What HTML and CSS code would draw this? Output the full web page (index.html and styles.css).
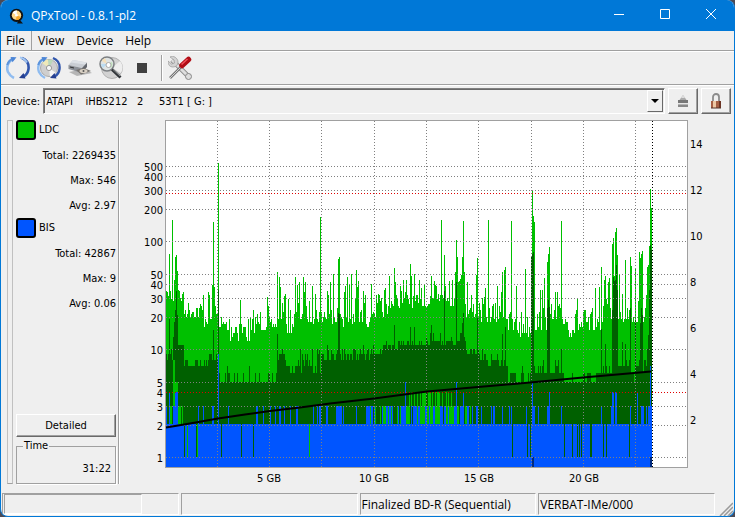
FILE: index.html
```
<!DOCTYPE html>
<html lang="en">
<head>
  <meta charset="utf-8">
  <title>QPxTool - 0.8.1-pl2</title>
  <link rel="stylesheet" href="styles.css">
</head>
<body>
  <div class="window">
    <header class="titlebar">
      <svg class="app-icon" viewBox="0 0 16 16">
        <path d="M10 11l4 4.5H8z" fill="#111"/>
        <circle cx="7.5" cy="7.3" r="6.6" fill="#111"/>
        <circle cx="7.5" cy="7.3" r="4.7" fill="#ffd98a"/>
        <path d="M7.5 7.3L3.5 4.8A4.7 4.7 0 0 1 8 2.6z" fill="#fff"/>
        <path d="M7.5 7.3l4.4 1.6A4.7 4.7 0 0 1 7 12z" fill="#f4a82c"/>
        <circle cx="7.5" cy="7.3" r="1.3" fill="#fff"/>
      </svg>
      <h1>QPxTool - 0.8.1-pl2</h1>
      <div class="window-buttons">
        <button aria-label="Minimize"><svg viewBox="0 0 10 10"><path d="M0 5.5h10"/></svg></button>
        <button aria-label="Maximize"><svg viewBox="0 0 10 10"><path d="M.5.5h9v9h-9z"/></svg></button>
        <button aria-label="Close"><svg viewBox="0 0 10 10"><path d="M0 0l10 10M10 0L0 10"/></svg></button>
      </div>
    </header>

    <nav class="menubar">
      <button class="active">File</button>
      <button>View</button>
      <button>Device</button>
      <button>Help</button>
    </nav>

    <div class="toolbar">
      <button aria-label="Rescan bus">
        <svg viewBox="0 0 24 24" fill="none">
          <path d="M8 2.500C2 5 0 11 2 16c1.200 2.500 3 4.500 6 6" stroke="#8fbcf0" stroke-width="2.600"/>
          <path d="M1.200 9C2 5.500 4.500 3.500 8 2.200" stroke="#5b93dc" stroke-width="2"/>
          <path d="M4.500 1l6 .2-4 5z" fill="#4d86d6"/>
          <path d="M16 2c5 2 7 6.500 6.500 11-.4 3-2 6-5 7.500" stroke="#3156ac" stroke-width="2.600"/>
          <path d="M14 1.500c3 .5 5.500 2.500 7 5" stroke="#a4c8f2" stroke-width="2"/>
          <path d="M19.500 22.500l-6.500-.5 4.500-5z" fill="#253f91"/>
        </svg>
      </button>
      <button aria-label="Update media info">
        <svg viewBox="0 0 24 24" fill="none">
          <circle cx="12" cy="12" r="8.500" fill="#cfcfcf" stroke="#aaa"/>
          <path d="M12 12L5 7a8.500 8.500 0 0 1 6-3.500z" fill="#efe9b8"/>
          <path d="M12 12L11 3.500a8.500 8.500 0 0 1 5 1z" fill="#b8d8b8"/>
          <path d="M12 12l7 5a8.500 8.500 0 0 1-6 3.500z" fill="#f5f5f5"/>
          <circle cx="12" cy="12" r="2.600" fill="#f7f7f7" stroke="#999"/>
          <path d="M8 2.500C2 5 0 11 2 16c1.200 2.500 3 4.500 6 6" stroke="#8fbcf0" stroke-width="2.400"/>
          <path d="M1.200 9C2 5.500 4.500 3.500 8 2.200" stroke="#5b93dc" stroke-width="2"/>
          <path d="M4.500 1l6 .2-4 5z" fill="#4d86d6"/>
          <path d="M16 2c5 2 7 6.500 6.500 11-.4 3-2 6-5 7.500" stroke="#3156ac" stroke-width="2.400"/>
          <path d="M19.500 22.500l-6.500-.5 4.500-5z" fill="#253f91"/>
        </svg>
      </button>
      <button aria-label="Eject or load">
        <svg viewBox="0 0 24 24">
          <path d="M1 16l8 4 15-3-8-4z" fill="#b5b5b5"/>
          <path d="M5 4l14 2.500L14 12 .5 9z" fill="#c9cdd3"/>
          <path d="M.5 9L14 12v5L.5 13z" fill="#8d9198"/>
          <path d="M14 12l5-5.500V11l-5 6z" fill="#63676e"/>
          <path d="M5 4l14 2.500-2 2L2.500 6.500z" fill="#dde1e6"/>
          <path d="M8 14l8-2 7 3-10 3.500z" fill="#77736f"/>
          <ellipse cx="15.500" cy="15" rx="4" ry="2" fill="#d8d0c4"/>
          <circle cx="15.500" cy="15" r="1" fill="#555"/>
          <path d="M2 11l4 1" stroke="#333" stroke-width="1"/>
        </svg>
      </button>
      <button aria-label="Scan media">
        <svg viewBox="0 0 24 24" fill="none">
          <circle cx="13" cy="12" r="10.500" fill="#d2d2d2" stroke="#b0b0b0"/>
          <path d="M13 12L21 5a10.500 10.500 0 0 1 1 12z" fill="#eee"/>
          <circle cx="8" cy="8" r="7" fill="#dfe4e4" stroke="#7d8083" stroke-width="1.500"/>
          <path d="M8 8L3 5a6 6 0 0 1 3-3z" fill="#f5dfb9"/>
          <path d="M8 8L2 8a6 6 0 0 0 2 4z" fill="#bbdcf2"/>
          <path d="M8 8l5-2a6 6 0 0 1-1 6z" fill="#bfe2bb"/>
          <circle cx="9.500" cy="9" r="2.500" fill="#fff" stroke="#aaa"/>
          <path d="M13 13.500l8.500 8" stroke="#303438" stroke-width="3"/>
          <path d="M14 13.500l7 6.500" stroke="#8b8f91"/>
        </svg>
      </button>
      <button aria-label="Stop"><svg viewBox="0 0 24 24"><path d="M7 7h10v10H7z" fill="#404040"/></svg></button>
      <span class="divider"></span>
      <button aria-label="Preferences">
        <svg viewBox="0 0 24 24" fill="none">
          <path d="M4 4l16 16" stroke="#888" stroke-width="4.600"/>
          <path d="M4 4l16 16" stroke="#dedede" stroke-width="3"/>
          <path d="M2 1l4 3 .5 3-3 1L0 5c0 4 2 6 5 6 3 0 5-2 5-5S7 .5 4 0z" fill="#d3d3d3" stroke="#999" stroke-width=".7"/>
          <circle cx="20.500" cy="20.500" r="3" fill="#ddd" stroke="#888"/>
          <path d="M2 22L14 10" stroke="#777" stroke-width="2.600"/>
          <path d="M2 22L14 10" stroke="#d0d0d0" stroke-width="1"/>
          <path d="M14 9.500l6.500-6" stroke="#b10d16" stroke-width="5.500" stroke-linecap="round"/>
          <path d="M13.500 8.500l6-5.500" stroke="#f0505a" stroke-width="1.600"/>
        </svg>
      </button>
    </div>

    <div class="device-row">
      <label for="device">Device:</label>
      <div class="combo">
        <select id="device">
          <option>ATAPI&nbsp;&nbsp;&nbsp; iHBS212&nbsp;&nbsp; 2&nbsp;&nbsp;&nbsp;&nbsp; 53T1 [ G: ]</option>
        </select>
        <span class="combo-arrow"></span>
      </div>
      <button class="push icon" aria-label="Eject">
        <svg viewBox="0 0 12 14"><path d="M6 1l5 7H1z" fill="#aaa"/><path d="M6 1l2 3H4z" fill="#ddd"/><path d="M1 6h10v3H1z" fill="#777"/><path d="M1 10h10v3H1z" fill="#888"/><path d="M1 10h10" stroke="#ddd"/></svg>
      </button>
      <button class="push icon" aria-label="Lock">
        <svg viewBox="0 0 12 16"><path d="M3 8V4a3 3 0 0 1 6 0v4" fill="none" stroke="#8b8b8b" stroke-width="1.800"/><path d="M1 8h10v7H1z" fill="#a65f43"/><path d="M3 8h3v7H3z" fill="#edc8a4"/><path d="M9 8h2v7H9z" fill="#6b3424"/><path d="M1 15h10" stroke="#54352b"/></svg>
      </button>
    </div>

    <main class="content">
      <div class="handle"></div>
      <aside class="stats">
        <div class="series"><span class="swatch ldc"></span>LDC</div>
        <p>Total: 2269435</p>
        <p>Max: 546</p>
        <p>Avg: 2.97</p>
        <div class="series"><span class="swatch bis"></span>BIS</div>
        <p>Total: 42867</p>
        <p>Max: 9</p>
        <p>Avg: 0.06</p>
        <button class="push detailed">Detailed</button>
        <fieldset>
          <legend>Time</legend>
          31:22
        </fieldset>
      </aside>
      <div class="splitter"></div>
      <svg id="chart" class="chart" viewBox="121 120 613 370" role="img" aria-label="LDC and BIS errors"></svg>
    </main>

    <footer class="statusbar">
      <div class="cell"><div class="progress"></div></div>
      <div class="cell"></div>
      <div class="cell">Finalized BD-R (Sequential)</div>
      <div class="cell">VERBAT-IMe/000</div>
      <svg class="grip" viewBox="0 0 14 14"><path d="M1 14L14 1M5 14l9-9M9 14l5-5" stroke="#9a9a9a" stroke-width="1.500"/></svg>
    </footer>
  </div>
  <script src="chart.js"></script>
</body>
</html>
```

FILE: styles.css
```
* {
  box-sizing: border-box;
}
body {
  margin: 0;
  background: #4c4a55;
  font-family: "DejaVu Sans Condensed", "DejaVu Sans", sans-serif;
  font-size: 11px;
  line-height: 14px;
  color: #000;
}
button, select {
  font: inherit;
  color: inherit;
  margin: 0;
  padding: 0;
  border: 0;
  border-radius: 0;
  background: none;
}
.window {
  display: flex;
  flex-direction: column;
  min-height: 100vh;
  border: 1px solid #0078d7;
  border-top: 0;
  border-radius: 8px;
  background: #efefef;
  overflow: hidden;
}

/* title bar */
.titlebar {
  display: flex;
  align-items: center;
  height: 31px;
  padding-left: 8px;
  background: #0078d7;
  color: #fff;
}
.app-icon {
  width: 16px;
  height: 16px;
}
.titlebar h1 {
  flex: 1;
  margin: 0 0 0 6px;
  font: 12px/16px "Open Sans", "Noto Sans", sans-serif;
}
.window-buttons {
  display: flex;
}
.window-buttons button {
  width: 46px;
  height: 31px;
}
.window-buttons svg {
  width: 10px;
  height: 10px;
  fill: none;
  stroke: #fff;
  overflow: visible;
}

/* menu and toolbar */
.menubar {
  display: flex;
  height: 21px;
  border-bottom: 1px solid #fff;
  box-shadow: inset 0 -1px #a0a0a0;
  font: 12px/18px "Open Sans", "Noto Sans", sans-serif;
}
.menubar button {
  height: 19px;
  padding: 0 6px 0 5px;
  border-right: 1px solid transparent;
}
.menubar .active {
  border-color: #a0a0a0;
}
.menubar button + button {
  padding-right: 5px;
  padding-left: 6px;
}
.toolbar {
  display: flex;
  align-items: center;
  height: 34px;
  padding: 0 1px 2px;
  border-bottom: 1px solid #fff;
  box-shadow: inset 0 -1px #a0a0a0;
}
.toolbar button {
  width: 31px;
  height: 31px;
}
.toolbar svg {
  display: block;
  width: 24px;
  height: 24px;
  margin: 0 auto;
}
.divider {
  width: 2px;
  height: 26px;
  margin: 0 1px 0 4px;
  border-left: 1px solid #a0a0a0;
  border-right: 1px solid #fff;
}

/* device selector */
.device-row {
  display: flex;
  align-items: center;
  gap: 3px;
  height: 30px;
  padding: 0 2px;
}
.device-row label {
  padding-top: 2px;
}
.combo {
  position: relative;
  flex: 1;
  height: 26px;
}
.combo select {
  appearance: none;
  width: 100%;
  height: 26px;
  padding-top: 1px;
  padding-left: 2px;
  border: 1px solid;
  border-color: #808080 #fff #fff #808080;
  box-shadow: inset 1px 1px #696969;
}
.combo-arrow {
  position: absolute;
  top: 2px;
  right: 2px;
  width: 16px;
  height: 22px;
  border: 1px solid;
  border-color: #fff #696969 #696969 #fff;
  background: #efefef;
  pointer-events: none;
}
.combo-arrow::after {
  content: "";
  position: absolute;
  top: 8px;
  left: 3px;
  border: 4px solid transparent;
  border-top-color: #000;
  border-bottom: 0;
}
.push {
  border: 1px solid;
  border-color: #fff #696969 #696969 #fff;
  box-shadow: inset -1px -1px #a0a0a0;
}
.push.icon {
  width: 30px;
  height: 26px;
}
.push.icon + .push.icon {
  margin-right: 1px;
}
.push svg {
  display: block;
  width: 12px;
  height: 16px;
  margin: 0 auto;
}

/* main area */
.content {
  display: flex;
  padding-top: 4px;
}
.handle {
  width: 6px;
  margin: 0 3px 6px 6px;
  border: 1px solid #c0c0c0;
  border-bottom-color: #a0a0a0;
}
.stats {
  display: flex;
  flex-direction: column;
  width: 100px;
  margin-bottom: 6px;
}
.series {
  display: flex;
  align-items: center;
  gap: 3px;
  padding-bottom: 1px;
  line-height: 20px;
}
.swatch {
  width: 20px;
  height: 20px;
  border: 2px solid #000;
  border-radius: 3px;
}
.ldc {
  background: #00c000;
}
.bis {
  background: #0055ff;
}
.stats p {
  height: 25px;
  margin: 0;
  padding-top: 8px;
  text-align: right;
}
.stats p + .series {
  margin-top: 2px;
}
.detailed {
  flex: none;
  height: 23px;
  margin-top: auto;
}
.stats fieldset {
  margin: 2px 0 0;
  padding: 9px 4px 7px;
  border: 1px solid #a0a0a0;
  box-shadow: 1px 1px #fff;
  text-align: right;
}
.stats legend {
  margin-left: 2px;
  padding: 0 1px;
  text-align: left;
}
.splitter {
  width: 3px;
  margin-bottom: 6px;
  margin-left: 2px;
  border-left: 1px solid #a0a0a0;
  box-shadow: inset 1px 0 #fff;
}
.chart {
  display: block;
  flex: 1;
  min-width: 0;
}
.chart text {
  font-size: 11px;
}
.chart .left {
  text-anchor: end;
}
.chart .middle {
  text-anchor: middle;
}
.bars {
  shape-rendering: crispEdges;
}

/* status bar */
.statusbar {
  display: flex;
  align-items: center;
  gap: 2px;
  height: 26px;
  padding: 1px 1px 0;
}
.cell {
  flex: 1;
  height: 22px;
  padding: 0 1px;
  border: 1px solid;
  border-color: #a0a0a0 #fff #fff #a0a0a0;
  font: 12px/22px "Open Sans", "Noto Sans", sans-serif;
}
.progress {
  width: 80%;
  height: 20px;
  border: 1px solid;
  border-color: #a0a0a0 #fff #fff #a0a0a0;
}
.grip {
  align-self: flex-end;
  width: 14px;
  height: 14px;
  margin-left: 2px;
}
```

FILE: chart.js
```
const LEFT = 166, TOP = 121, RIGHT = 687, BOTTOM = 467, END = 652;

// error count -> y, log scale
const logY = v => Math.round(457 - 107.8 * Math.log10(v));

let seed = 7;
function rnd() {
  seed = (seed * 16807) % 2147483647;
  return seed / 2147483647;
}

// [first x, highest y, lowest y]
const ldcMax = [[166, 290, 304], [184, 297, 318], [203, 301, 327], [220, 303, 341], [240, 309, 343],
  [253, 305, 332], [270, 320, 328], [277, 296, 320], [285, 296, 335], [299, 298, 324], [343, 296, 328],
  [370, 297, 318], [390, 292, 308], [410, 294, 308], [430, 289, 302], [446, 294, 308], [466, 296, 318],
  [480, 298, 322], [494, 300, 324], [508, 308, 338], [535, 304, 332], [551, 301, 328], [567, 303, 338],
  [590, 307, 332], [601, 296, 322], [622, 296, 324], [645, 294, 310]];
const ldcAvg = [[166, 345, 360], [173, 325, 340], [178, 345, 345], [184, 358, 368], [209, 350, 360],
  [219, 366, 382], [232, 373, 382], [246, 366, 382], [257, 373, 382], [277, 349, 361], [286, 354, 373],
  [300, 345, 373], [321, 345, 361], [333, 341, 361], [342, 345, 361], [372, 345, 354], [384, 341, 350],
  [398, 337, 346], [430, 333, 342], [441, 338, 346], [456, 330, 345], [466, 345, 355], [475, 350, 361],
  [488, 354, 367], [508, 366, 382], [538, 360, 378], [561, 373, 382], [597, 366, 376],
  [612, 358, 367], [630, 360, 382], [638, 355, 375], [645, 345, 365]];

const ldcSpikes = [[167, 292], [169, 254], [170, 291], [172, 220], [174, 280], [175, 257], [176, 255],
  [177, 271], [178, 290], [179, 291], [182, 294], [203, 295], [208, 292], [209, 295], [212, 285],
  [213, 222], [214, 287], [218, 163], [240, 300], [267, 297], [277, 272], [279, 277], [280, 287],
  [285, 294], [295, 277], [297, 285], [299, 282], [303, 277], [304, 292], [305, 282], [312, 286],
  [315, 294], [320, 217], [327, 291], [328, 295], [330, 282], [333, 274], [338, 259], [339, 257],
  [344, 292], [345, 286], [347, 277], [349, 285], [351, 274], [356, 270], [357, 287], [358, 281],
  [363, 291], [365, 295], [371, 284], [376, 295], [378, 294], [379, 295], [384, 290], [385, 288],
  [389, 276], [394, 268], [395, 282], [400, 286], [401, 291], [403, 280], [405, 292], [406, 280],
  [410, 264], [411, 276], [414, 274], [419, 280], [421, 288], [424, 285], [431, 276], [434, 281],
  [435, 285], [436, 286], [438, 294], [440, 295], [441, 220], [442, 295], [444, 255], [445, 286],
  [449, 281], [452, 280], [455, 272], [456, 240], [457, 257], [458, 282], [459, 281], [460, 279],
  [461, 275], [462, 257], [463, 221], [464, 272], [467, 282], [471, 295], [476, 275], [477, 258],
  [484, 297], [485, 288], [488, 220], [497, 286], [501, 292], [502, 272], [504, 270], [505, 267],
  [511, 221], [516, 286], [525, 269], [531, 256], [532, 191], [533, 216], [534, 222], [540, 290],
  [542, 290], [544, 278], [547, 262], [548, 254], [549, 247], [555, 292], [557, 292], [561, 221],
  [577, 298], [595, 288], [599, 287], [601, 267], [604, 280], [605, 276], [608, 282], [609, 278],
  [612, 244], [613, 238], [614, 276], [615, 232], [616, 228], [617, 255], [619, 275], [622, 294],
  [625, 260], [630, 257], [631, 266], [635, 268], [639, 252], [640, 258], [641, 254], [642, 251],
  [646, 295], [647, 267], [648, 265], [649, 246], [650, 189], [651, 208]];
const avgSpikes = [[169, 319], [174, 322], [175, 310], [176, 291], [177, 315], [213, 330], [218, 290],
  [277, 334], [338, 313], [339, 314], [394, 325], [410, 327], [414, 327], [431, 325], [444, 291],
  [456, 282], [462, 323], [463, 313], [477, 318], [502, 334], [505, 327], [531, 256], [532, 254],
  [533, 252], [547, 308], [548, 300], [549, 307], [561, 349], [601, 329], [605, 344], [612, 310],
  [613, 277], [614, 281], [615, 280], [616, 265], [617, 290], [622, 342], [625, 344], [630, 308],
  [635, 320], [640, 323], [641, 308], [642, 315], [648, 335], [649, 290], [650, 245], [651, 250]];

// [x, width, level]
const bisBars = [[166, 1, 3], [169, 1, 4], [173, 2, 3], [175, 1, 4], [176, 2, 4], [198, 1, 3], [203, 1, 3],
  [212, 2, 3], [218, 1, 9], [228, 1, 3], [256, 2, 3], [263, 1, 3], [270, 1, 3], [275, 1, 3], [279, 2, 3],
  [284, 1, 3], [290, 1, 3], [296, 2, 3], [313, 1, 3], [317, 1, 3], [319, 2, 3], [326, 2, 3], [336, 6, 3],
  [343, 1, 3], [356, 1, 3], [366, 4, 3], [371, 2, 3], [374, 1, 3], [382, 1, 3], [386, 2, 3], [389, 2, 3],
  [392, 1, 3], [398, 1, 3], [401, 5, 3], [405, 1, 5], [411, 1, 3], [413, 4, 3], [418, 2, 3],
  [425, 2, 3], [429, 1, 3], [433, 2, 3], [440, 3, 3], [444, 2, 3], [448, 1, 3], [454, 2, 3], [456, 1, 5],
  [460, 4, 3], [463, 1, 4], [467, 2, 3], [472, 1, 3], [476, 2, 3], [481, 1, 3], [491, 1, 3], [493, 2, 3],
  [502, 1, 3], [509, 1, 3], [511, 1, 3], [526, 1, 3], [532, 1, 5], [533, 2, 3], [538, 1, 3], [547, 3, 3],
  [549, 1, 4], [561, 1, 3], [601, 1, 3], [611, 1, 3], [612, 2, 4], [615, 2, 4], [630, 1, 3], [637, 1, 4],
  [641, 3, 3], [646, 1, 3], [648, 4, 3], [650, 1, 7]];
const greenStrips = [[170, 2, 3], [173, 2, 8], [175, 3, 5], [178, 3, 3], [182, 1, 3], [366, 1, 3],
  [370, 1, 3], [375, 1, 3], [380, 1, 3], [383, 3, 3], [388, 1, 3], [391, 1, 3], [397, 1, 3], [400, 1, 3],
  [406, 4, 3], [409, 1, 4], [411, 1, 4], [414, 1, 4], [417, 1, 4], [420, 1, 4], [422, 3, 4], [425, 1, 4],
  [428, 3, 4], [432, 1, 4], [435, 1, 4], [437, 3, 4], [442, 1, 4], [446, 1, 4], [448, 1, 4],
  [451, 1, 4], [417, 7, 3], [427, 2, 3], [430, 10, 3], [446, 8, 3], [457, 2, 3], [465, 2, 3], [470, 1, 3]];
const gapsDark = [184, 196, 221, 241, 253, 512, 527, 530, 564, 572, 577, 579, 581, 590, 591, 603, 606, 629];
const gapsLight = [187, 197, 309];

const speed = '166,427.500 190,423.500 218,418.500 245,414.500 270,411 300,407.500 330,403.500 374,398.500 427,391.500 478,387 530,382.500 583,377.500 651,371.500';

function column(x, y, w = 1, end = BOTTOM) {
  return `M${x} ${y}h${w}V${end}h${-w}z`;
}

function series(ranges, spikes) {
  const peaks = new Map(spikes);
  let d = '';
  let r = 0;
  for (let x = LEFT; x < END; x++) {
    if (ranges[r + 1] && x >= ranges[r + 1][0]) r++;
    const [, hi, lo] = ranges[r];
    // counts are whole numbers, mostly near the low end
    const y = hi + (lo - hi) * Math.pow(rnd(), 0.6);
    const count = Math.round(Math.pow(10, (457 - y) / 107.8));
    d += column(x, peaks.has(x) ? peaks.get(x) : logY(count));
  }
  return `<path d="${d}"`;
}

let out = '<g class="bars">';
out += `<path d="M165 120h523v348H165z" fill="#a0a0a0"/><path d="M${LEFT} ${TOP}H${RIGHT}V${BOTTOM}H${LEFT}z" fill="#fff"/>`;
out += series(ldcMax, ldcSpikes) + ' fill="#00c000"/>';
out += series(ldcAvg, avgSpikes) + ' fill="#006000"/>';
out += `<path d="${greenStrips.map(([x, w, v]) => column(x, logY(v), w)).join('')}" fill="#00c000"/>`;
out += `<path d="M${LEFT} 424H${END}V${BOTTOM}H${LEFT}z" fill="#0055ff"/>`;
out += `<path d="${bisBars.map(([x, w, v]) => column(x, logY(v), w)).join('')}" fill="#0055ff"/>`;
out += `<path d="${gapsDark.map(x => column(x, 424, 1, 457)).join('')}" fill="#006000"/>`;
out += `<path d="${gapsLight.map(x => column(x, 424, 1, 457)).join('')}" fill="#00c000"/>`;
out += '<path d="M532 457h2v10h-2zM650 457h2v10h-2z" fill="#002a80"/>';

// grid
let grid = '';
for (const v of [1, 2, 3, 5, 10, 20, 30, 40, 50, 100, 200, 300, 400, 500]) {
  grid += `M${LEFT} ${logY(v)}.5H${RIGHT}`;
}
for (const x of [217, 269, 321, 374, 426, 478, 531, 583, 635]) {
  grid += `M${x}.5 ${TOP}V${BOTTOM}`;
}
out += `<path d="${grid}" stroke="#808080" stroke-dasharray="1 2"/>`;
out += `<path d="M${LEFT} 193.500H${RIGHT}M${LEFT} 392.500H${RIGHT}" stroke="#e00000" stroke-dasharray="1 2"/>`;
out += `<path d="M652.500 ${TOP}V${BOTTOM}" stroke="#000" stroke-dasharray="1 2"/></g>`;
out += `<polyline points="${speed}" fill="none" stroke="#000" stroke-width="2"/>`;

// axis labels
for (const v of [1, 2, 3, 4, 5, 10, 20, 30, 40, 50, 100, 200, 300, 400, 500]) {
  out += `<text class="left" x="163" y="${logY(v) + 5}">${v}</text>`;
}
for (let v = 2; v <= 14; v += 2) {
  out += `<text x="690" y="${470 - v * 23}">${v}</text>`;
}
[5, 10, 15, 20].forEach((v, i) => {
  out += `<text class="middle" x="${269 + i * 105}" y="482">${v} GB</text>`;
});

document.getElementById('chart').innerHTML = out;
```
